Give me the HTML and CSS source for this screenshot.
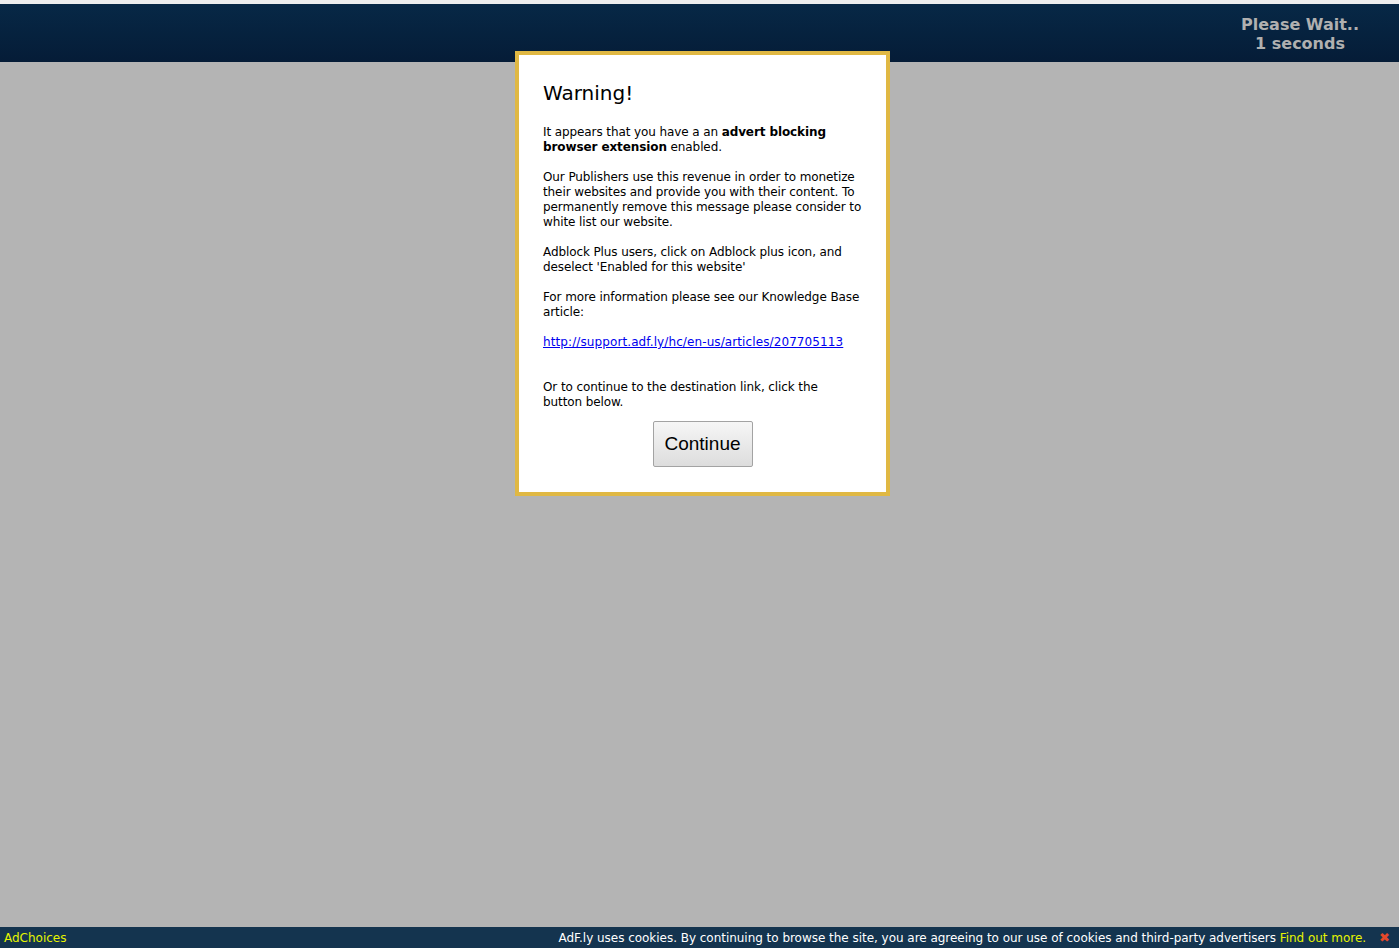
FILE: index.html
```html
<!DOCTYPE html>
<html>
<head>
<meta charset="utf-8">
<title>Please Wait</title>
<link rel="stylesheet" href="styles.css">
</head>
<body>
<div class="topline"></div>
<header class="header">
  <div class="wait">Please Wait..<br>1 seconds</div>
</header>
<div class="modal">
  <h1 class="title">Warning!</h1>
  <p>It appears that you have a an <b>advert blocking browser extension</b> enabled.</p>
  <p>Our Publishers use this revenue in order to monetize their websites and provide you with their content. To permanently remove this message please consider to white list our website.</p>
  <p>Adblock Plus users, click on Adblock plus icon, and deselect 'Enabled for this website'</p>
  <p>For more information please see our Knowledge Base article:</p>
  <p class="linkp"><a href="#">http://support.adf.ly/hc/en-us/articles/207705113</a></p>
  <p class="last">Or to continue to the destination link, click the button below.</p>
  <div class="btnrow"><button class="btn">Continue</button></div>
</div>
<footer class="footer">
  <a class="adchoices" href="#">AdChoices</a>
  <div class="cookie">AdF.ly uses cookies. By continuing to browse the site, you are agreeing to our use of cookies and third-party advertisers <a href="#">Find out more.</a></div>
  <span class="close">&#10006;</span>
</footer>
</body>
</html>
```
FILE: styles.css
```css
html, body {
  margin: 0;
  padding: 0;
  height: 100%;
}
body {
  background: #b4b4b4;
  font-family: "DejaVu Sans", Verdana, sans-serif;
  position: relative;
  overflow: hidden;
}
.topline {
  height: 4px;
  background: #eeeeee;
}
.header {
  height: 58px;
  background: linear-gradient(#072846, #051c37);
  display: flex;
  justify-content: flex-end;
  align-items: flex-start;
}
.wait {
  font-family: "DejaVu Sans", Verdana, sans-serif;
  font-weight: bold;
  font-size: 16px;
  line-height: 19px;
  color: #b0b0b0;
  text-align: center;
  margin-top: 11px;
  margin-right: 40px;
}
.modal {
  position: absolute;
  top: 51px;
  left: 515px;
  width: 323px;
  padding: 26px 20px 25px 24px;
  background: #fff;
  border: 4px solid #e0b843;
  color: #000;
  font-size: 12px;
  line-height: 15px;
  letter-spacing: -0.1px;
}
.title {
  font-size: 20px;
  font-weight: normal;
  line-height: 24px;
  letter-spacing: 0;
  margin: 0 0 20px 0;
}
.modal p {
  margin: 0 0 15px 0;
}
.modal p.linkp {
  margin-bottom: 30px;
  letter-spacing: 0.1px;
}
.modal p.last {
  margin-bottom: 11px;
  max-width: 300px;
}
.modal a {
  color: #0000ee;
  text-decoration: underline;
}
.btnrow {
  display: flex;
  justify-content: center;
  padding-right: 4px;
}
.btn {
  width: 100px;
  height: 46px;
  font-family: "Liberation Sans", Arial, sans-serif;
  font-size: 19px;
  letter-spacing: 0;
  color: #000;
  background: linear-gradient(#f6f6f6, #dddddd);
  border: 1px solid #a3a3a3;
  border-radius: 2px;
  padding: 0;
}
.footer {
  position: fixed;
  left: 0;
  right: 0;
  bottom: 0;
  height: 21px;
  background: #14344f;
  display: flex;
  align-items: center;
  font-size: 12px;
  color: #fff;
}
.adchoices {
  color: #e6f400;
  text-decoration: none;
  margin-left: 4px;
}
.cookie {
  margin-left: auto;
  letter-spacing: -0.03px;
}
.cookie a {
  color: #e6f400;
  text-decoration: none;
}
.close {
  color: #e5482a;
  font-size: 13px;
  margin-left: 13px;
  margin-right: 9px;
  font-weight: bold;
}
```
